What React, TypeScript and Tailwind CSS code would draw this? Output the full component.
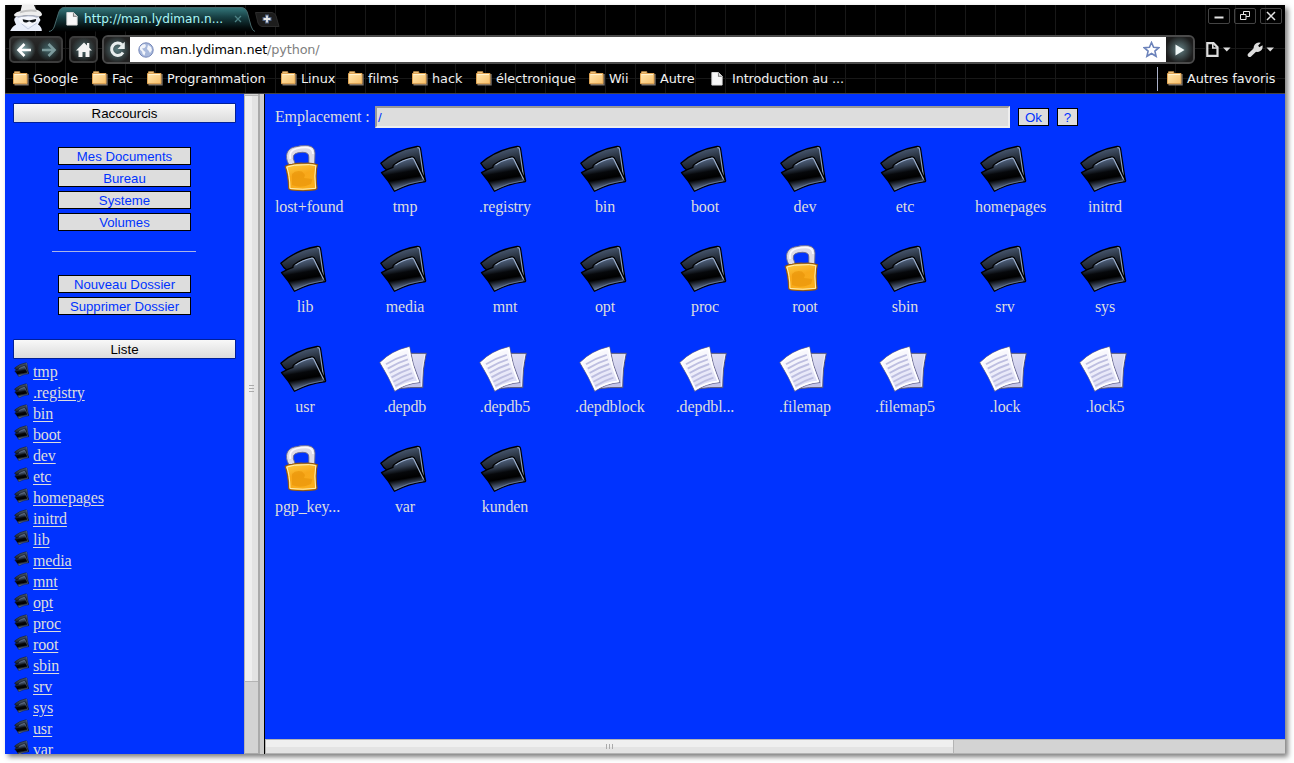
import React from "react";

const ui = "font-['DejaVu_Sans',sans-serif]";
const serif = "font-['Liberation_Serif',serif]";
const arial = "font-['Liberation_Sans',sans-serif]";

function FolderArt({ className }: { className: string }) {
  return (
    <svg viewBox="0 0 48 48" className={className}>
      <defs>
        <linearGradient id="fBack" gradientUnits="userSpaceOnUse" x1="20" y1="4" x2="25" y2="26">
          <stop offset="0" stopColor="#50617c" />
          <stop offset="0.5" stopColor="#2b3544" />
          <stop offset="1" stopColor="#0a0d12" />
        </linearGradient>
        <linearGradient id="fFront" gradientUnits="userSpaceOnUse" x1="22" y1="12" x2="28" y2="46">
          <stop offset="0" stopColor="#63789a" />
          <stop offset="0.3" stopColor="#333f51" />
          <stop offset="0.48" stopColor="#06080b" />
          <stop offset="0.66" stopColor="#000" />
          <stop offset="0.95" stopColor="#6c82a6" />
        </linearGradient>
      </defs>
      <path d="M1.8 19.2 Q17 6 38 2.5 Q41.2 2 41.6 5 L46.4 37 L17 34 L4.8 23.5 Z" fill="url(#fBack)" stroke="#000" strokeWidth="1.3" strokeLinejoin="round" />
      <path d="M38.4 3.6 Q40.3 3.4 40.5 5.5 L44.4 32" fill="none" stroke="#8fa3c2" strokeWidth="1.1" />
      <path d="M2.5 28.6 Q9 25 14 23.4 Q13.5 21.4 15.5 20.2 Q23 15 32.5 13 Q35 12.5 35.9 15 L46.6 36.4 Q46.8 37.8 45 37.8 Q29.5 39.5 15.4 47.2 Q9.8 37 2.5 28.6 Z" fill="url(#fFront)" stroke="#000" strokeWidth="1.3" strokeLinejoin="round" />
      <path d="M16.5 21.1 Q23 16.2 32.3 14.2 Q34.2 13.8 34.9 15.6 L44.6 35.6" fill="none" stroke="#9db0cd" strokeWidth="1.1" />
      <path d="M16 45.5 Q29 38.6 44 36.8" fill="none" stroke="#7288aa" strokeWidth="0.7" />
    </svg>
  );
}

function LockArt() {
  return (
    <svg viewBox="0 0 48 48" className="block size-12">
      <defs>
        <linearGradient id="lkBody" x1="0" y1="0" x2="0.3" y2="1">
          <stop offset="0" stopColor="#ffcf45" />
          <stop offset="0.5" stopColor="#f8a81a" />
          <stop offset="1" stopColor="#fbae1c" />
        </linearGradient>
      </defs>
      <path d="M9.8 20.5 C5 12 8 4.5 15.5 3 Q22 1.3 29 1.7 Q35.8 2.5 36 9 L35.6 20.8 H29.8 L29.8 13 Q30 8.2 23.5 8.3 Q13.3 8.4 14.3 14.5 L16.5 20.8 Z" fill="#dddbe8" stroke="#6b6a88" strokeWidth="0.9" />
      <path d="M11.2 15 Q9.5 7 17 4.8 Q24 3 29 3.6 Q33.8 4.3 34 10" fill="none" stroke="#fbfaff" strokeWidth="1.7" />
      <path d="M6.2 22.3 Q8 20.8 13 20.2 Q20 18.8 25 19.3 Q32 18.6 38.3 20.6 Q36.2 31 38 44 Q37.8 46 35 45.9 Q25 47.5 12.5 46 Q9.6 46 9.6 43.5 Q9.2 31 6.2 22.3 Z" fill="url(#lkBody)" stroke="#8c5415" strokeWidth="1.1" />
      <path d="M7.8 23 Q15 20.6 23 20.9 Q31 20 36.8 21.6 Q35 31 36.6 44.3 Q24 46 11 44.5 Q10.8 31 7.8 23 Z" fill="none" stroke="#fff0b5" strokeWidth="1" />
      <path d="M13 30 Q17 25.5 23 27.5 L26 31 L25 34 L33.5 35 L32 40 Q22 45 13 41 Z" fill="#e58f05" opacity="0.55" />
    </svg>
  );
}

function PagesArt() {
  return (
    <svg viewBox="0 0 48 48" className="block size-12">
      <defs>
        <linearGradient id="pgBack" x1="0" y1="0" x2="0.4" y2="1">
          <stop offset="0" stopColor="#e6e6f6" />
          <stop offset="1" stopColor="#c3c4e8" />
        </linearGradient>
        <linearGradient id="pgFront" x1="0.2" y1="0" x2="0.6" y2="1">
          <stop offset="0" stopColor="#fff" />
          <stop offset="0.5" stopColor="#f1f1fb" />
          <stop offset="1" stopColor="#d8d9f4" />
        </linearGradient>
      </defs>
      <path d="M26 9.3 L47.3 9.3 Q43.5 25 43.8 43.6 Q30 43 18 45 Z" fill="url(#pgBack)" stroke="#565674" strokeWidth="1" />
      <path d="M45.9 10.5 Q42.3 25 42.5 42" fill="none" stroke="#f6f6ff" strokeWidth="0.8" />
      <path d="M0.8 18.5 Q13 6.5 30.5 2.7 Q33 20 40.9 38.5 Q27 39.5 15.8 47.3 Q10 33 0.8 18.5 Z" fill="url(#pgFront)" stroke="#62628c" strokeWidth="0.9" />
      <path d="M2.5 18.8 Q13 8.2 29.7 4.2 Q32 21 39.2 37.4 Q26 39 16.4 45.4 Q11 33 2.5 18.8 Z" fill="none" stroke="#fff" strokeWidth="1.7" />
      <g fill="none" stroke="#bdbee0" strokeWidth="1.9">
        <path d="M7 20.2 Q17 14 27.8 10.8" />
        <path d="M8.7 24.6 Q18.5 18.6 28.9 15.4" />
        <path d="M10.6 29 Q20.5 23.2 30.2 20" />
        <path d="M12.5 33.4 Q22 27.8 31.5 24.6" />
        <path d="M14.4 37.8 Q24 32.2 33 29.2" />
        <path d="M16.2 42 Q25.5 36.6 34.5 33.7" />
      </g>
    </svg>
  );
}

function YellowFolder() {
  return (
    <svg viewBox="0 0 16 16" className="block size-4 shrink-0">
      <defs>
        <linearGradient id="yf" x1="0" y1="0" x2="1" y2="1">
          <stop offset="0" stopColor="#ffe6b0" />
          <stop offset="1" stopColor="#f8bf68" />
        </linearGradient>
      </defs>
      <path d="M1.5 13.8 H15 V3" fill="none" stroke="#77706a" strokeWidth="1.4" />
      <path d="M1.5 3.5 V0.8 H6.8 V2.5" fill="#fbd08a" stroke="#c9964e" />
      <path d="M0.5 2.5 H14 V12.7 H0.5 Z" fill="url(#yf)" stroke="#e2a655" />
      <path d="M1.5 3.5 H13" stroke="#fff3d0" />
    </svg>
  );
}

function PageIcon() {
  return (
    <svg viewBox="0 0 12 15" className="block h-[14px] w-3 shrink-0">
      <path d="M0.5 0.5 H7.5 L11.5 4.5 V14 H0.5 Z" fill="#f7f7f7" stroke="#ddd" />
      <path d="M7 0.5 V5 H11.5 Z" fill="#777" />
      <path d="M8 1 V4 H11 Z" fill="#ddd" />
    </svg>
  );
}

function Spy() {
  return (
    <svg viewBox="0 0 34 27" className="block h-[27px] w-[34px]">
      <path d="M1.2 26 Q3 21.5 7 19.7 L5.3 15.5 Q4.8 12.5 8 11.5 L29 10.5 L31.5 15 L29 19.5 Q33 22 32.8 26 Z" fill="#e9eefa" />
      <path d="M9.6 12 H28.5 L28.2 16.5 Q26 20.5 19.5 21.5 L13 19 Q9 16 9.6 12 Z" fill="#f5f7fd" />
      <path d="M13.6 14.2 L19.3 15.3 Q20 15.6 21 15.3 L27.2 14 L26.7 16.3 Q24.5 18.2 21.8 16.9 L20.2 16.3 L18.8 16.9 Q16 18.4 14.2 16.4 Z" fill="#101418" />
      <path d="M12.5 18.7 L19 24 L28 17.8" fill="none" stroke="#c3cbe0" />
      <path d="M5.2 9.2 Q7 7 11.5 6 L13 0 H25 L27 4.6 Q33 6.5 33 9.8 Q32.5 11.8 28 11.5 Q19 8.8 9.5 11.7 Q4.5 12 5.2 9.2 Z" fill="#eee" />
      <path d="M11.4 6 Q19 3.6 27.2 4.8 L27.7 7 Q19 5.8 11 8.3 Z" fill="#c2c2c2" />
      <path d="M7 11.6 Q19 8.6 30.5 11.3 L28 12.7 Q19 10 9.5 12.8 Z" fill="#aeb4c4" />
    </svg>
  );
}

function Tab() {
  return (
    <div className="relative h-[25px] w-[206px]">
      <svg viewBox="0 0 206 25" className="absolute inset-0 h-[25px] w-[206px]">
        <defs>
          <linearGradient id="tabg" x1="0" y1="0" x2="0" y2="1">
            <stop offset="0" stopColor="#34777b" />
            <stop offset="0.4" stopColor="#173f43" />
            <stop offset="0.85" stopColor="#030b0c" />
            <stop offset="1" stopColor="#000" />
          </linearGradient>
        </defs>
        <path d="M0 24.5 Q4 24 5.5 19 L9.5 6 Q11 0.5 15 0.5 H192 Q197 0.5 198.5 6 L202 19 Q203.5 24 206 24.5 Z" fill="url(#tabg)" />
        <path d="M0 24.5 Q4 24 5.5 19 L9.5 6 Q11 0.5 15 0.5 H192 Q197 0.5 198.5 6 L202 19 Q203.5 24 206 24.5" fill="none" stroke="#47686b" />
      </svg>
      <div className={`relative flex h-[24px] items-center pl-[17px] text-[#a9f7f7] ${ui}`}>
        <PageIcon />
        <span className="ml-[6px] w-[142px] whitespace-nowrap text-[12.1px]">http://man.lydiman.n...</span>
        <svg viewBox="0 0 8 8" className="ml-2 size-2"><path d="M1 1 L7 7 M7 1 L1 7" stroke="#4d8285" strokeWidth="1.3" /></svg>
      </div>
    </div>
  );
}

const bookmarks: [string, string][] = [
  ["Google", "w-[79px]"],
  ["Fac", "w-[55px]"],
  ["Programmation", "w-[134px]"],
  ["Linux", "w-[67px]"],
  ["films", "w-[64px]"],
  ["hack", "w-[64px]"],
  ["électronique", "w-[113px]"],
  ["Wii", "w-[51px]"],
  ["Autre", "w-[71px]"],
];

const btnFrame = "border-2 border-[#3c3c3c] bg-linear-to-b from-[#2b2b2b] to-[#161616]";

function WinBtn({ children }: { children: React.ReactNode }) {
  return (
    <div className="flex h-4 w-[22px] items-center justify-center rounded-[2px] border border-[#444]">
      <svg viewBox="0 0 12 12" className="size-3" fill="none" stroke="#e4e4e4">{children}</svg>
    </div>
  );
}

function BrowserChrome() {
  return (
    <header className="flex h-[89px] flex-col border-b border-[#444] bg-black bg-[repeating-linear-gradient(to_right,#181818_0px,#181818_1px,transparent_1px,transparent_30px),linear-gradient(to_bottom,transparent_43px,#181818_43px,#181818_44px,transparent_44px,transparent_73px,#181818_73px,#181818_74px,transparent_74px)]">
      <div className="flex h-[30px] shrink-0">
        <div className="ml-1 w-[38px]"><Spy /></div>
        <div className="ml-0.5 pt-0.5"><Tab /></div>
        <svg viewBox="0 0 26 15" className="ml-0 mt-[7px] h-[15px] w-[26px]">
          <path d="M0.5 0.5 H17 Q20 1 21 4 L24 14.5 H7 Q4 14 3 11 Z" fill="#1d1d1d" stroke="#2c2c2c" />
          <path d="M12 2.5 V11.5 M7.5 7 H16.5" stroke="#4d6080" strokeWidth="4" />
          <path d="M12 3.5 V10.5 M8.5 7 H15.5" stroke="#e6e6e6" strokeWidth="1.8" />
        </svg>
        <div className="ml-auto mr-[3px] mt-[3px] flex gap-1">
          <WinBtn><path d="M1.5 7.5 H10.5" strokeWidth="2" /></WinBtn>
          <WinBtn><path d="M4.5 1.5 H10.5 V6.5 H4.5 Z" /><path d="M1.5 4.5 H7 V9.5 H1.5 Z" fill="#000" /></WinBtn>
          <WinBtn><path d="M2 2 L10 10 M10 2 L2 10" strokeWidth="1.5" /></WinBtn>
        </div>
      </div>
      <div className="flex h-[30px] shrink-0">
        <div className={`ml-1 mt-[1px] flex h-[27px] w-[54px] rounded-[5px] ${btnFrame}`}>
          <div className="flex w-[25px] items-center justify-center bg-[radial-gradient(circle,#83aaae_0%,transparent_72%)]">
            <svg viewBox="0 0 16 16" className="size-4" fill="none" stroke="#fff" strokeWidth="2.6"><path d="M15 8 H3 M8.5 2 L2.5 8 L8.5 14" /></svg>
          </div>
          <div className="flex w-[25px] items-center justify-center bg-[radial-gradient(circle,#42666a_0%,transparent_68%)]">
            <svg viewBox="0 0 16 16" className="size-4" fill="none" stroke="#7c9a9c" strokeWidth="2.6"><path d="M1 8 H13 M7.5 2 L13.5 8 L7.5 14" /></svg>
          </div>
        </div>
        <div className={`ml-[6px] mt-[1px] flex h-[27px] w-[29px] items-center justify-center rounded-[5px] ${btnFrame}`}>
          <div className="flex size-[25px] shrink-0 items-center justify-center bg-[radial-gradient(circle,#4c6c70_0%,transparent_70%)]">
            <svg viewBox="0 0 16 16" className="size-4"><path d="M8 0.5 L11 3.5 V1 H13.3 V5.8 L16 8.5 H13.5 V15 H9.5 V10 H6.5 V15 H2.5 V8.5 H0 Z" fill="#f3f3f3" /></svg>
          </div>
        </div>
        <div className="ml-1 flex h-[29px] w-[1093px] overflow-hidden rounded-[6px] border-2 border-[#4b4b4b] bg-[#222]">
          <div className="flex w-[26px] items-center justify-center bg-[radial-gradient(circle,#587b7f_0%,#222_75%)]">
            <svg viewBox="0 0 16 16" className="size-[17px]"><path d="M12.3 3.6 A5.8 5.8 0 1 0 13.2 10.8" fill="none" stroke="#e8eeee" strokeWidth="2.8" /><path d="M14.8 0.8 V7.5 H8 Z" fill="#e8eeee" /></svg>
          </div>
          <div className={`flex h-[25px] w-[1036px] items-center bg-white text-[12.85px] ${ui}`}>
            <svg viewBox="0 0 16 16" className="ml-2 size-4 shrink-0">
              <circle cx="8" cy="8" r="7.2" fill="#a8b9dc" stroke="#7587b8" />
              <path d="M2 5 Q4 2 7 2 L8 4 L6.5 6 L4 6.5 L6 9 L7.5 10 L6.5 13.5 Q4 12 4 9.5 L2 7.5 Z M10 3 L13 5 L14 8 L12 11 L10.5 8.5 L9 7 Z" fill="#f2f5fb" />
            </svg>
            <span className="ml-[6px] whitespace-nowrap tracking-[-0.14px] text-black">man.lydiman.net<span className="text-[#808080]">/python/</span></span>
            <svg viewBox="0 0 17 17" className="ml-auto mr-[6px] size-[17px] shrink-0"><path d="M8.5 1.5 L10.6 6.3 L15.8 6.7 L11.9 10.1 L13.1 15.3 L8.5 12.5 L3.9 15.3 L5.1 10.1 L1.2 6.7 L6.4 6.3 Z" fill="#fff" stroke="#6c83bb" strokeWidth="1.6" /></svg>
          </div>
          <div className="flex flex-1 items-center justify-center bg-[radial-gradient(circle,#638084_0%,#1c1c1c_75%)]">
            <svg viewBox="0 0 10 12" className="h-3 w-2.5"><path d="M0.5 0.5 L9.5 6 L0.5 11.5 Z" fill="#eef6f6" /></svg>
          </div>
        </div>
        <svg viewBox="0 0 26 17" className="ml-[10px] mt-[6px] h-[17px] w-[26px]">
          <path d="M2.3 2.2 H8.5 L12.5 6.2 V14.8 H2.3 Z" fill="none" stroke="#ddd" strokeWidth="2.2" />
          <path d="M7.8 2 V7 H13" fill="none" stroke="#ddd" strokeWidth="1.6" />
          <path d="M18 6.5 H25.5 L21.8 10.5 Z" fill="#ddd" />
        </svg>
        <svg viewBox="0 0 28 17" className="ml-4 mt-[6px] h-[17px] w-7">
          <path d="M2.7 14 L8.7 8.2" stroke="#ddd" strokeWidth="4" strokeLinecap="round" />
          <path d="M6.8 9.8 Q5.7 4.5 9.3 2.2 Q11.5 0.9 13.8 1.8 L11.2 4.6 L12.2 6.2 L15.5 4.2 Q16.3 8 13.3 10 Q10.5 11.7 7.8 10.3 Z" fill="#ddd" />
          <path d="M19.5 6.5 H27 L23.2 10.5 Z" fill="#ddd" />
        </svg>
      </div>
      <div className={`flex h-[28px] shrink-0 items-center pl-2 text-[12.85px] tracking-[-0.05px] text-[#f0f0f0] ${ui}`}>
        {bookmarks.map(([name, w]) => (
          <div key={name} className={`flex shrink-0 items-center gap-1 whitespace-nowrap ${w}`}>
            <YellowFolder />
            <span>{name}</span>
          </div>
        ))}
        <PageIcon />
        <span className="ml-[9px] whitespace-nowrap tracking-[-0.12px]">Introduction au ...</span>
        <div className="ml-auto h-6 w-px bg-[#a9b0c8]" />
        <div className="ml-[9px] flex w-[118px] items-center gap-1 whitespace-nowrap"><YellowFolder /><span>Autres favoris</span></div>
      </div>
    </header>
  );
}

function SideButton({ label }: { label: string }) {
  return <button className="h-[18px] w-[133px] border border-black bg-[#ddd] pt-px text-center text-[13.2px] leading-4 text-[#0033ff]">{label}</button>;
}

function SideTitle({ label }: { label: string }) {
  return <div className="mx-2 h-5 shrink-0 rounded-[1px] border border-[#001f99] bg-linear-to-b from-[#f8f8f8] to-[#dcdcdc] text-center text-[13.33px] leading-[19px] text-black">{label}</div>;
}

const list = ["tmp", ".registry", "bin", "boot", "dev", "etc", "homepages", "initrd", "lib", "media", "mnt", "opt", "proc", "root", "sbin", "srv", "sys", "usr", "var"];

function Sidebar() {
  return (
    <aside className={`flex h-full w-[239px] flex-col overflow-hidden pt-[9px] ${arial}`}>
      <SideTitle label="Raccourcis" />
      <div className="mt-6 flex shrink-0 flex-col items-center gap-1">
        <SideButton label="Mes Documents" />
        <SideButton label="Bureau" />
        <SideButton label="Systeme" />
        <SideButton label="Volumes" />
      </div>
      <div className="ml-[47px] mt-5 h-px w-36 shrink-0 bg-[#aab4e6]" />
      <div className="mt-[23px] flex shrink-0 flex-col items-center gap-1">
        <SideButton label="Nouveau Dossier" />
        <SideButton label="Supprimer Dossier" />
      </div>
      <div className="mt-6 flex shrink-0 flex-col"><SideTitle label="Liste" /></div>
      <ul className={`mt-0.5 pl-[9px] text-[16px] leading-[21px] tracking-[-0.13px] text-[#ddd] ${serif}`}>
        {list.map((name) => (
          <li key={name} className="flex h-[21px]">
            <FolderArt className="mt-px block size-[15px]" />
            <span className="ml-1 underline underline-offset-2">{name}</span>
          </li>
        ))}
      </ul>
    </aside>
  );
}

function VScroll() {
  return (
    <div className="flex h-full w-[16px] shrink-0 flex-col border-x border-[#b4b4b4] border-r-2 border-r-[#aaa] bg-[#d3d3d3]">
      <div className="mt-px flex h-[587px] items-center justify-center border-y border-[#b4b4b4] bg-[linear-gradient(to_right,#efefef_54%,#e3e3e3_54%)]">
        <div className="flex w-[5px] flex-col gap-0.5">
          <i className="h-px bg-[#aaa]" /><i className="h-px bg-[#aaa]" /><i className="h-px bg-[#aaa]" />
        </div>
      </div>
      <div className="mt-auto h-px bg-[#aaa]" />
    </div>
  );
}

function HScroll() {
  return (
    <div className="flex h-[15px] shrink-0 border-y border-[#b4b4b4] bg-[#d3d3d3]">
      <div className="flex w-[689px] items-center justify-center gap-0.5 border-x border-[#b4b4b4] bg-[linear-gradient(to_bottom,#efefef_54%,#e3e3e3_54%)]">
        <i className="h-[5px] w-px bg-[#aaa]" /><i className="h-[5px] w-px bg-[#aaa]" /><i className="h-[5px] w-px bg-[#aaa]" />
      </div>
    </div>
  );
}

const entries = [
  "*lost+found", "tmp", ".registry", "bin", "boot", "dev", "etc", "homepages", "initrd",
  "lib", "media", "mnt", "opt", "proc", "*root", "sbin", "srv", "sys",
  "usr", "#.depdb", "#.depdb5", "#.depdblock", "#.depdbl...", "#.filemap", "#.filemap5", "#.lock", "#.lock5",
  "*pgp_key...", "var", "kunden",
];

function Entry({ code }: { code: string }) {
  const kind = code[0];
  const name = kind === "*" || kind === "#" ? code.slice(1) : code;
  return (
    <div className="flex h-[100px] w-[60px] flex-col">
      <div className="ml-1">
        {kind === "*" ? <LockArt /> : kind === "#" ? <PagesArt /> : <FolderArt className="block size-12" />}
      </div>
      <div className="mt-[6px] whitespace-nowrap text-center leading-[18px] tracking-[-0.1px]">{name}</div>
    </div>
  );
}

export default function App() {
  return (
    <div className="h-[763px] w-[1294px] overflow-hidden bg-white pl-[5px] pt-[5px]">
      <div className="flex h-[749px] w-[1280px] flex-col shadow-[3px_3px_5px_0px_rgba(0,0,0,0.5)]">
        <BrowserChrome />
        <div className="flex h-[660px] bg-[#0033ff]">
          <Sidebar />
          <VScroll />
          <div className="h-full w-[5px] shrink-0 border-r border-black bg-[#ccc]" />
          <main className={`flex h-full flex-1 flex-col text-[16px] text-[#ddd] ${serif}`}>
            <div className="flex h-[50px] shrink-0 pl-[10px] pt-3">
              <span className="w-[99px] whitespace-nowrap leading-[22px] tracking-[-0.15px]">Emplacement :</span>
              <div className={`ml-px h-[22px] w-[635px] border-2 border-b-[#eee] border-l-[#999] border-r-[#eee] border-t-[#999] bg-[#ddd] pl-px text-[13.33px] leading-[19px] text-[#0033ff] ${arial}`}>/</div>
              <button className={`ml-2 mt-[2px] h-[18px] w-[31px] border border-black bg-[#ddd] pt-px text-[13.33px] leading-4 text-[#0033ff] ${arial}`}>Ok</button>
              <button className={`ml-2 mt-[2px] h-[18px] w-[21px] border border-black bg-[#ddd] pt-px text-[13.33px] leading-4 text-[#0033ff] ${arial}`}>?</button>
            </div>
            <div className="grid flex-1 grid-cols-[repeat(9,100px)] content-start pl-[10px]">
              {entries.map((e) => <Entry key={e} code={e} />)}
            </div>
            <HScroll />
          </main>
        </div>
      </div>
    </div>
  );
}
